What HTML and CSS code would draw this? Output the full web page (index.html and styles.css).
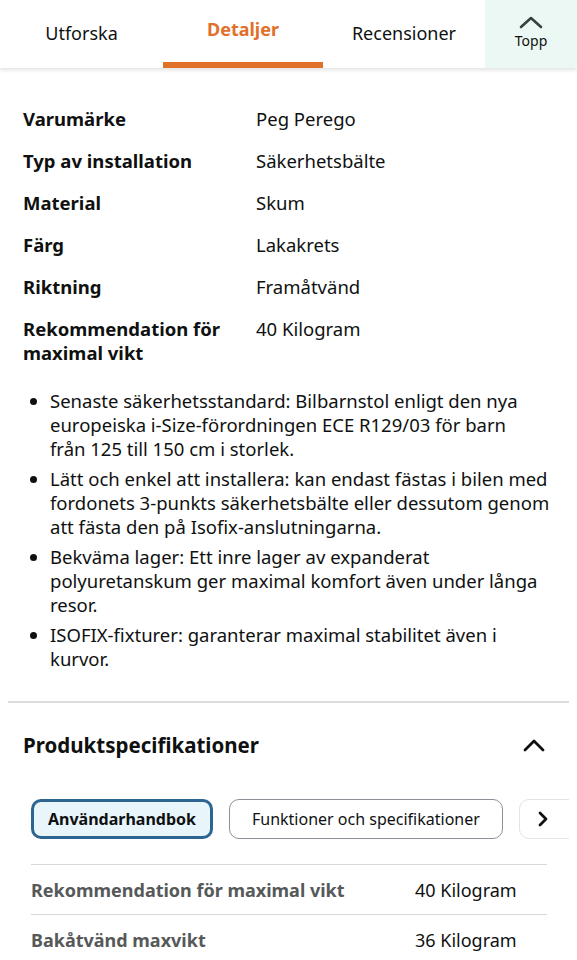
FILE: index.html
```html
<!DOCTYPE html>
<html lang="sv">
<head>
    <meta charset="UTF-8">
    <meta name="viewport" content="width=device-width, initial-scale=1.0">
    <title>Detaljer</title>
    <link rel="stylesheet" href="styles.css">
</head>
<body>
<header class="tabs">
    <div class="tab">Utforska</div>
    <div class="tab active">Detaljer</div>
    <div class="tab">Recensioner</div>
    <div class="tab top">
        <svg width="24" height="14" viewBox="0 0 24 14"><path d="M2 12 L12 3 L22 12" fill="none" stroke="#3a3f3f" stroke-width="2.6" stroke-linecap="round" stroke-linejoin="round"/></svg>
        <span>Topp</span>
    </div>
</header>

<main class="content">
    <div class="facts">
        <div class="fact"><div class="label">Varumärke</div><div class="value">Peg Perego</div></div>
        <div class="fact"><div class="label">Typ av installation</div><div class="value">Säkerhetsbälte</div></div>
        <div class="fact"><div class="label">Material</div><div class="value">Skum</div></div>
        <div class="fact"><div class="label">Färg</div><div class="value">Lakakrets</div></div>
        <div class="fact"><div class="label">Riktning</div><div class="value">Framåtvänd</div></div>
        <div class="fact"><div class="label">Rekommendation för maximal vikt</div><div class="value">40 Kilogram</div></div>
    </div>

    <ul class="bullets">
        <li>Senaste säkerhetsstandard: Bilbarnstol enligt den nya europeiska i-Size-förordningen ECE R129/03 för barn från&nbsp;125 till 150 cm i storlek.</li>
        <li>Lätt och enkel att installera: kan endast fästas i bilen med fordonets 3-punkts säkerhetsbälte eller dessutom genom att fästa den på Isofix-anslutningarna.</li>
        <li>Bekväma lager: Ett inre lager av expanderat polyuretanskum ger maximal komfort även under långa resor.</li>
        <li>ISOFIX-fixturer: garanterar maximal stabilitet även i kurvor.</li>
    </ul>
</main>

<section class="specs">
    <div class="specs-head">
        <h2>Produktspecifikationer</h2>
        <svg width="22" height="14" viewBox="0 0 22 14"><path d="M2 12 L11 3 L20 12" fill="none" stroke="#0f1111" stroke-width="2.8" stroke-linecap="round" stroke-linejoin="round"/></svg>
    </div>
    <div class="chips">
        <div class="chip selected">Användarhandbok</div>
        <div class="chip">Funktioner och specifikationer</div>
        <div class="chip more">
            <svg width="12" height="18" viewBox="0 0 12 18"><path d="M3 3 L9 9 L3 15" fill="none" stroke="#0f1111" stroke-width="2.8" stroke-linecap="round" stroke-linejoin="round"/></svg>
        </div>
    </div>
    <div class="spec-table">
        <div class="spec-row"><div class="spec-label">Rekommendation för maximal vikt</div><div class="spec-value">40 Kilogram</div></div>
        <div class="spec-row"><div class="spec-label">Bakåtvänd maxvikt</div><div class="spec-value">36 Kilogram</div></div>
    </div>
</section>
</body>
</html>
```

FILE: styles.css
```css
body {
    margin: 0;
    font-family: "Noto Sans", "Open Sans", sans-serif;
    color: #0f1111;
    background: #fff;
    overflow: hidden;
}
.tabs {
    display: flex;
    height: 68px;
    background: #fff;
    box-shadow: 0 2px 4px rgba(0, 0, 0, 0.12);
}
.tab {
    flex: 0 0 auto;
    display: flex;
    justify-content: center;
    align-items: center;
    padding-bottom: 2px;
    font-size: 18px;
    box-sizing: border-box;
}
.tab:nth-child(1) { width: 163px; }
.tab:nth-child(2) { width: 160px; }
.tab:nth-child(3) { width: 162px; }
.tab.active {
    color: #e0702a;
    font-weight: bold;
    align-items: flex-start;
    padding-top: 17px;
    border-bottom: 6px solid #e0702a;
}
.tab.top {
    width: 92px;
    flex-direction: column;
    background: #ecf8f3;
    padding: 0 0 3px 0;
    font-size: 14px;
    color: #0f1111;
}
.tab.top span {
    margin-top: 2px;
}
.content {
    padding: 39px 23px 0 23px;
}
.fact {
    display: flex;
    font-size: 18.5px;
    line-height: 24px;
    margin-bottom: 18px;
}
.fact .label {
    width: 233px;
    font-weight: bold;
    padding-right: 12px;
    box-sizing: border-box;
}
.bullets {
    margin: 24px 0 0 0;
    padding-left: 27px;
    font-size: 18.5px;
    line-height: 24px;
}
.bullets li {
    margin-bottom: 6px;
}
.specs {
    margin: 30px 8px 0 8px;
    border-top: 2px solid #dcdcdc;
    padding: 22px 22px 0 15px;
}
.specs-head {
    display: flex;
    justify-content: space-between;
    align-items: center;
    padding-right: 2px;
}
.specs-head h2 {
    margin: 0;
    font-size: 20.5px;
    line-height: 40px;
}
.chips {
    display: flex;
    gap: 16px;
    margin: 34px -22px 0 8px;
    overflow: hidden;
}
.chip {
    flex: 0 0 auto;
    height: 40px;
    box-sizing: border-box;
    display: flex;
    align-items: center;
    padding: 0 22px;
    border: 1px solid #8d9096;
    border-radius: 10px;
    font-size: 16px;
}
.chip.selected {
    border: 3px solid #2d6591;
    background: #e8f5fb;
    font-weight: bold;
    padding: 0 14px;
}
.chip.more {
    border-color: #e3e3e3;
    padding: 0 30px 0 17px;
}
.spec-table {
    margin: 25px 0 0 8px;
    border-top: 1px solid #d5d9d9;
}
.spec-row {
    display: flex;
    height: 49px;
    align-items: center;
    border-bottom: 1px solid #d5d9d9;
    font-size: 18px;
}
.spec-label {
    width: 384px;
    font-weight: bold;
    color: #565959;
}
```
